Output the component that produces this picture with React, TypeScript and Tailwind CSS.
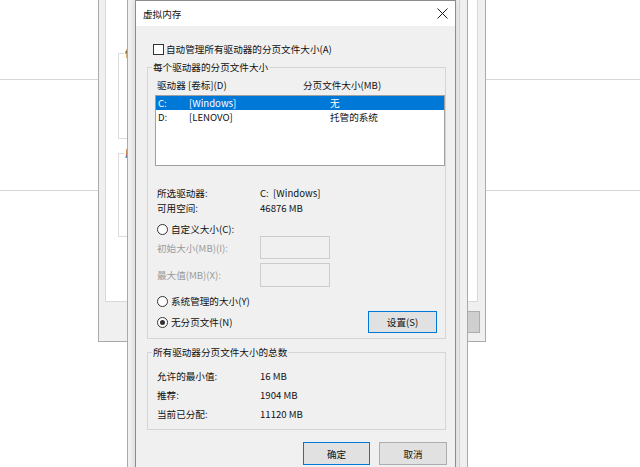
import React from 'react';

const CloseIcon = () => (
    <svg width="11" height="11" viewBox="0 0 11 11" fill="none" stroke="#1a1a1a" strokeWidth="1">
        <path d="M0.5 0.5L10.5 10.5M10.5 0.5L0.5 10.5" />
    </svg>
);

const Radio = ({ checked }: { checked?: boolean }) => (
    <span className="w-[11px] h-[11px] rounded-full border border-[#333333] bg-white flex items-center justify-center shrink-0">
        {checked && <span className="w-[5px] h-[5px] rounded-full bg-[#333333]" />}
    </span>
);

const GroupBox: React.FC<{ label: string; className?: string; children: React.ReactNode }> = ({ label, className, children }) => (
    <div className={`relative border border-[#d5d5d5] ${className ?? ''}`}>
        <span className="absolute -top-[8px] left-[4px] px-[1px] bg-[#f0f0f0] leading-[14px]">{label}</span>
        {children}
    </div>
);

const InfoRow = ({ label, value, h }: { label: string; value: string; h: string }) => (
    <div className={`flex items-center pl-[9px] ${h}`}>
        <span className="w-[103px]">{label}</span>
        <span className="whitespace-pre">{value}</span>
    </div>
);

export default function App() {
    return (
        <div className="relative w-[640px] h-[467px] overflow-hidden bg-white text-[9.6px] leading-[14px] text-[#111111] font-['Noto_Sans_CJK_SC','Noto_Sans',sans-serif]">
            {/* page behind the windows */}
            <div className="absolute top-[79px] left-0 right-0 h-px bg-[#d6d6d6]" />
            <div className="absolute top-[190px] left-0 right-0 h-px bg-[#d6d6d6]" />

            {/* System properties window */}
            <div className="absolute left-[98px] -top-[10px] w-[388px] h-[352px] border border-[#a9a9a9] bg-[#f0f0f0]">
                <div className="ml-[6px] w-[373px] h-[311px] border border-[#d9d9d9] bg-white pt-[61px]">
                    <div className="ml-[12px] w-[340px] h-[86px] border border-[#dcdcdc] relative">
                        <span className="absolute -top-[8px] left-[5px] bg-white px-[1px]">性能</span>
                    </div>
                    <div className="ml-[12px] mt-[14px] w-[340px] h-[84px] border border-[#dcdcdc] relative">
                        <span className="absolute -top-[8px] left-[5px] bg-white px-[1px]">用户</span>
                    </div>
                </div>
                <div className="flex justify-end pr-[5px] mt-[9px]">
                    <div className="w-[75px] h-[22px] border border-[#adadad] bg-[#cfcfcf]" />
                </div>
            </div>

            {/* Performance options window */}
            <div className="absolute left-[127px] -top-[10px] w-[341px] h-[500px] border border-[#a9a9a9] bg-[#f0f0f0]">
                <div className="w-[332px] h-full border-r border-[#d6d6d6]" />
            </div>

            {/* Virtual memory dialog */}
            <div className="absolute left-[135px] top-0 w-[321px] h-[490px] border border-[#8c8c8c] bg-[#f0f0f0] shadow-[0_0_6px_rgba(0,0,0,0.15)]">
                <div className="h-[25px] bg-white flex items-center justify-between pl-[7px] pr-[7px]">
                    <span>虚拟内存</span>
                    <CloseIcon />
                </div>

                <div className="pl-[11px] pr-[9px] pt-[16px]">
                    <div className="flex items-center h-[14px] pl-[6px] gap-[2px]">
                        <span className="w-[11px] h-[11px] border border-[#333333] bg-white shrink-0" />
                        <span>自动管理所有驱动器的分页文件大小(A)</span>
                    </div>

                    <GroupBox label="每个驱动器的分页文件大小" className="mt-[11px] pt-[10px] pb-[5px]">
                        <div className="flex h-[14px] items-center pl-[9px]">
                            <span className="w-[146px]">驱动器 [卷标](D)</span>
                            <span>分页文件大小(MB)</span>
                        </div>
                        <div className="ml-[7px] mt-[3px] h-[71px] border border-[#a0a0a0] bg-white">
                            <div className="flex h-[14px] items-center pl-[2px] bg-[#0078d7] text-white">
                                <span className="w-[31px]">C:</span>
                                <span className="w-[141px]">[Windows]</span>
                                <span>无</span>
                            </div>
                            <div className="flex h-[14px] items-center pl-[2px]">
                                <span className="w-[31px]">D:</span>
                                <span className="w-[141px]">[LENOVO]</span>
                                <span>托管的系统</span>
                            </div>
                        </div>

                        <div className="mt-[19px]">
                            <InfoRow label="所选驱动器:" value="C:  [Windows]" h="h-[15px]" />
                            <InfoRow label="可用空间:" value="46876 MB" h="h-[15px]" />
                        </div>

                        <div className="flex items-center gap-[3px] h-[14px] mt-[7px] pl-[9px]">
                            <Radio />
                            <span>自定义大小(C):</span>
                        </div>
                        <div className="flex items-center h-[23px] pl-[9px]">
                            <span className="w-[103px] text-[#9a9a9a]">初始大小(MB)(I):</span>
                            <span className="w-[70px] h-[23px] border border-[#cccccc] bg-[#f0f0f0]" />
                        </div>
                        <div className="flex items-center h-[24px] mt-[4px] pl-[9px]">
                            <span className="w-[103px] text-[#9a9a9a]">最大值(MB)(X):</span>
                            <span className="w-[70px] h-[24px] border border-[#cccccc] bg-[#f0f0f0]" />
                        </div>
                        <div className="flex items-center gap-[3px] h-[14px] mt-[7px] pl-[9px]">
                            <Radio />
                            <span>系统管理的大小(Y)</span>
                        </div>
                        <div className="flex items-center h-[22px] mt-[3px] pl-[9px] pr-[8px]">
                            <div className="flex items-center gap-[3px] flex-1">
                                <Radio checked />
                                <span>无分页文件(N)</span>
                            </div>
                            <button className="w-[69px] h-[22px] border border-[#0078d7] bg-[#e1e1e1] leading-[14px]">设置(S)</button>
                        </div>
                    </GroupBox>

                    <GroupBox label="所有驱动器分页文件大小的总数" className="mt-[13px] pt-[13px] pb-[6px]">
                        <InfoRow label="允许的最小值:" value="16 MB" h="h-[19px]" />
                        <InfoRow label="推荐:" value="1904 MB" h="h-[19px]" />
                        <InfoRow label="当前已分配:" value="11120 MB" h="h-[19px]" />
                    </GroupBox>

                    <div className="flex justify-end gap-[9px] mt-[12px]">
                        <button className="w-[67px] h-[23px] border border-[#0078d7] bg-[#e1e1e1] leading-[14px]">确定</button>
                        <button className="w-[68px] h-[23px] border border-[#adadad] bg-[#e1e1e1] leading-[14px] -mr-[1px]">取消</button>
                    </div>
                </div>
            </div>
        </div>
    );
}
